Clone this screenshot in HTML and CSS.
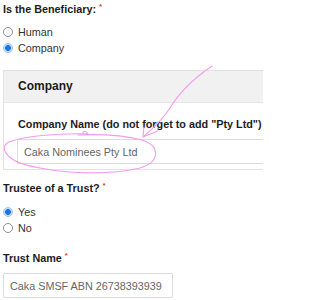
FILE: index.html
```html
<!DOCTYPE html>
<html>
<head>
<meta charset="utf-8">
<link rel="stylesheet" href="styles.css">
</head>
<body>
<div class="page">
  <form class="form">
    <div class="label">Is the Beneficiary: <span class="req">*</span></div>
    <div class="radios">
      <label class="radio"><input type="radio" name="ben"> Human</label>
      <label class="radio"><input type="radio" name="ben" checked> Company</label>
    </div>

    <section class="card">
      <div class="card-head">Company</div>
      <div class="card-body">
        <div class="label">Company Name (do not forget to add "Pty Ltd")</div>
        <input class="text wide" type="text" value="Caka Nominees Pty Ltd" readonly>
      </div>
    </section>

    <div class="label gap">Trustee of a Trust? <span class="req">*</span></div>
    <div class="radios small-gap">
      <label class="radio"><input type="radio" name="trust" checked> Yes</label>
      <label class="radio"><input type="radio" name="trust"> No</label>
    </div>

    <div class="label gap-lg">Trust Name <span class="req">*</span></div>
    <input class="text short" type="text" value="Caka SMSF ABN 26738393939" readonly>
  </form>

  <svg class="ink" width="263" height="300" viewBox="0 0 263 300">
    <path d="M88 134 C60 133 20 136 7 143 C-1 150 8 163 40 168 C70 174 110 175 140 168 C160 162 161 146 142 140 C122 135 100 134 78 135 M88 134 C86 131 84 130 83 133" />
    <path d="M212 66 C196 77 180 91 170 108 C162 121 151 130 143 137 M143 137 L144 127 M143 137 L158 131" />
  </svg>
</div>
</body>
</html>
```

FILE: styles.css
```css
html, body {
  margin: 0;
  padding: 0;
  background: #fff;
}
body {
  width: 263px;
  height: 300px;
  overflow: hidden;
  font-family: "Liberation Sans", Arial, sans-serif;
  color: #222;
}
.page {
  position: relative;
  width: 263px;
  height: 300px;
  overflow: hidden;
}
.form {
  margin: 0;
  padding: 1px 0 0 3px;
}
.label {
  font-size: 10.8px;
  font-weight: bold;
  line-height: 16px;
  color: #1c1c1c;
  white-space: nowrap;
}
.req {
  color: #e0473a;
  font-size: 8px;
  vertical-align: top;
  line-height: 12px;
}
.radios {
  display: flex;
  flex-direction: column;
  margin-top: 7px;
}
.radios.small-gap {
  margin-top: 8px;
}
.radio {
  display: flex;
  align-items: center;
  gap: 5px;
  height: 16px;
  font-size: 10.8px;
  color: #333;
}
.radio input {
  appearance: none;
  -webkit-appearance: none;
  margin: 0;
  width: 10px;
  height: 10px;
  border-radius: 50%;
  border: 1px solid #8d8d8d;
  background: #fff;
  box-sizing: border-box;
}
.radio input:checked {
  border-color: #9cc4f2;
  background: radial-gradient(circle, #1b74e4 0 2.6px, #c8defa 3.2px);
}
.card {
  margin-top: 14px;
  border: 1px solid #e2e2e2;
  border-right: none;
  background: #fff;
}
.card-head {
  background: #f1f1f1;
  border-bottom: 1px solid #e6e6e6;
  line-height: 31px;
  padding-left: 14px;
  font-size: 12px;
  font-weight: bold;
  color: #1a1a1a;
}
.card-body {
  padding: 13px 0 5px 13px;
}
.card-body .label {
  padding-left: 1px;
}
.text {
  display: block;
  box-sizing: border-box;
  height: 25px;
  margin: 7px 0 0 0;
  padding: 0 6px;
  border: 1px solid #dcdcdc;
  border-radius: 1px;
  background: #fff;
  font-family: "Liberation Sans", Arial, sans-serif;
  font-size: 10.8px;
  color: #666;
  outline: none;
}
.text.wide {
  width: 100%;
  border-right: none;
}
.text.short {
  width: 170px;
}
.gap {
  margin-top: 10px;
}
.gap-lg {
  margin-top: 14px;
}
.ink {
  position: absolute;
  left: 0;
  top: 0;
  pointer-events: none;
}
.ink path {
  fill: none;
  stroke: #f29cf0;
  stroke-width: 1.1;
  stroke-linecap: round;
  stroke-linejoin: round;
}
```
